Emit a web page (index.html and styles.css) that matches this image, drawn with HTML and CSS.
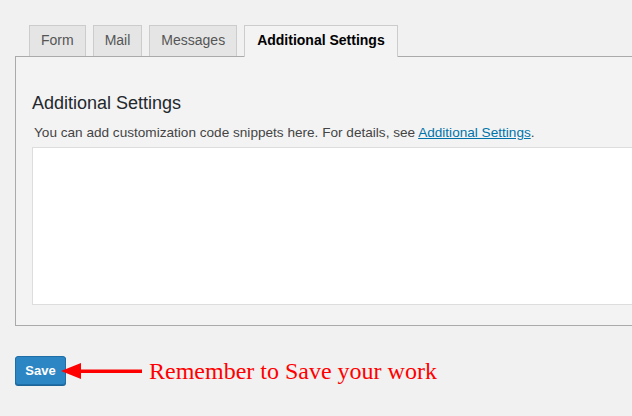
FILE: index.html
```html
<!DOCTYPE html>
<html lang="en">
<head>
<meta charset="utf-8">
<title>Additional Settings</title>
<link rel="stylesheet" href="styles.css">
</head>
<body>
<div class="wrap">
  <ul class="tabs">
    <li class="tab">Form</li>
    <li class="tab">Mail</li>
    <li class="tab">Messages</li>
    <li class="tab active">Additional Settings</li>
  </ul>
  <div class="panel">
    <h2 class="title">Additional Settings</h2>
    <p class="desc">You can add customization code snippets here. For details, see <a href="#">Additional Settings</a>.</p>
    <div class="code"></div>
  </div>
  <div class="actions">
    <button class="save">Save</button>
    <svg class="arrow" width="82" height="16" viewBox="0 0 82 16" aria-hidden="true">
      <polygon points="0,8 20,0 20,16" fill="#ff0000"/>
      <rect x="18" y="6.5" width="63" height="3.5" fill="#ff0000"/>
    </svg>
    <span class="note">Remember to Save your work</span>
  </div>
</div>
</body>
</html>
```
FILE: styles.css
```css
html, body {
  margin: 0;
  padding: 0;
}
body {
  background: #f1f1f1;
  font-family: "Liberation Sans", Arial, sans-serif;
  color: #444;
  width: 632px;
  height: 416px;
  overflow: hidden;
}
.wrap {
  padding: 25px 0 0 15px;
  width: 720px;
}
.tabs {
  list-style: none;
  margin: 0 0 -1px 0;
  padding: 0 0 0 14px;
  display: flex;
  align-items: flex-start;
  gap: 7px;
  position: relative;
  z-index: 1;
}
.tab {
  height: 30px;
  line-height: 29px;
  padding: 0 11px;
  font-size: 14px;
  color: #555;
  background: #e5e5e5;
  border: 1px solid #ccc;
  border-bottom: 0;
}
.tab.active {
  height: 31px;
  padding: 0 12px;
  background: #f3f3f3;
  color: #000;
  font-weight: bold;
}
.panel {
  background: #f3f3f3;
  border: 1px solid #aaa;
  border-right: 0;
  padding: 34px 0 20px 16px;
}
.title {
  margin: 0;
  font-size: 18px;
  line-height: 24px;
  font-weight: normal;
  color: #23282d;
}
.desc {
  margin: 9px 0 5px 0;
  padding-left: 2px;
  font-size: 13.6px;
  line-height: 18px;
  color: #444;
}
.desc a {
  color: #0073aa;
  text-decoration: underline;
}
.code {
  height: 156px;
  background: #fff;
  border: 1px solid #ddd;
  border-right: 0;
}
.actions {
  display: flex;
  align-items: center;
  margin-top: 30px;
}
.save {
  width: 51px;
  height: 29px;
  padding: 0;
  border: 1px solid #1f6ea8;
  border-radius: 3px;
  background: #2c86c3;
  color: #fff;
  font-family: "Liberation Sans", Arial, sans-serif;
  font-size: 13px;
  font-weight: bold;
  box-shadow: 0 1px 0 #1d6498;
}
.arrow {
  display: block;
  margin-left: -5px;
  position: relative;
}
.note {
  margin-left: 6px;
  font-family: "Liberation Serif", "Times New Roman", serif;
  font-size: 24px;
  line-height: 28px;
  color: #ff0000;
}
```
